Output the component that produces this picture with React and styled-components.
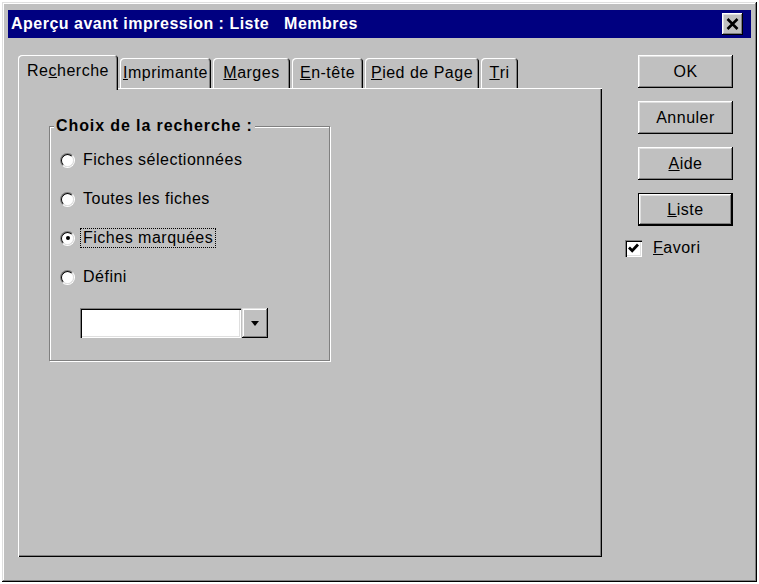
import styled, { createGlobalStyle } from "styled-components";

const GlobalStyle = createGlobalStyle`
  html, body {
    margin: 0;
    padding: 0;
    background: #fff;
  }
`;

const Window = styled.div`
  box-sizing: border-box;
  margin: 2px;
  width: 755px;
  height: 580px;
  padding: 8px 6px 6px 6px;
  background: #c0c0c0;
  box-shadow: inset -1px -1px #000, inset 1px 1px #dfdfdf,
    inset -2px -2px #808080, inset 2px 2px #fff;
  display: flex;
  flex-direction: column;
  font-family: "Liberation Sans", Arial, sans-serif;
  font-size: 16px;
  letter-spacing: 0.5px;
  color: #000;
`;

const TitleBar = styled.div`
  height: 28px;
  padding: 0 8px 0 3px;
  background: #000080;
  color: #fff;
  display: flex;
  align-items: center;
  justify-content: space-between;
`;

const Title = styled.span`
  font-weight: bold;
  letter-spacing: 0.5px;
  white-space: pre;
`;

const CloseButton = styled.div`
  box-sizing: border-box;
  width: 21px;
  height: 22px;
  background: #c0c0c0;
  box-shadow: inset -1px -1px #000, inset 1px 1px #fff,
    inset -2px -2px #808080, inset 2px 2px #dfdfdf;
  display: flex;
  align-items: center;
  justify-content: center;
`;

const Body = styled.div`
  display: flex;
  padding: 17px 0 0 10px;
  gap: 23px;
`;

const TabControl = styled.div`
  width: 584px;
  display: flex;
  flex-direction: column;
`;

const TabStrip = styled.div`
  height: 33px;
  display: flex;
  align-items: flex-end;
  gap: 2px;
`;

const Tab = styled.div`
  box-sizing: border-box;
  position: relative;
  z-index: ${(p) => (p.$active ? 1 : 0)};
  width: ${(p) => p.$w}px;
  height: ${(p) => (p.$active ? 35 : 30)}px;
  margin-bottom: ${(p) => (p.$active ? -2 : 0)}px;
  padding-bottom: ${(p) => (p.$active ? 3 : 0)}px;
  background: #c0c0c0;
  border-radius: 4px 4px 0 0;
  box-shadow: inset 1px 1px #fff, inset -1px 0 #000, inset -2px 0 #808080;
  display: flex;
  align-items: center;
  justify-content: center;
  white-space: nowrap;
`;

const Panel = styled.div`
  box-sizing: border-box;
  height: 469px;
  padding: 38px 0 0 31px;
  box-shadow: inset 1px 1px #fff, inset -1px -1px #000, inset -2px -2px #808080;
`;

const Group = styled.div`
  box-sizing: border-box;
  position: relative;
  width: 281px;
  height: 235px;
  padding: 23px 0 0 10px;
  border: 1px solid #808080;
  box-shadow: inset 1px 1px #fff, 1px 1px #fff;
  display: flex;
  flex-direction: column;
  gap: 19px;
`;

const Caption = styled.span`
  position: absolute;
  top: -10px;
  left: 4px;
  padding: 0 2px;
  line-height: 18px;
  background: #c0c0c0;
  font-weight: bold;
  letter-spacing: 0.9px;
`;

const RadioRow = styled.div`
  height: 20px;
  display: flex;
  align-items: center;
  gap: 5px;
`;

const RadioOuter = styled.span`
  box-sizing: border-box;
  width: 15px;
  height: 15px;
  flex-shrink: 0;
  border-radius: 50%;
  border: 1px solid;
  border-color: #808080 #fff #fff #808080;
  display: flex;
`;

const RadioInner = styled.span`
  box-sizing: border-box;
  width: 13px;
  height: 13px;
  border-radius: 50%;
  border: 1.5px solid;
  border-color: #000 #dfdfdf #dfdfdf #000;
  background: #fff;
  display: flex;
  align-items: center;
  justify-content: center;
`;

const RadioDot = styled.span`
  width: 4px;
  height: 4px;
  border-radius: 50%;
  background: #000;
`;

const RadioLabel = styled.span`
  padding: 0 2px;
  line-height: 18px;
  border: 1px dotted ${(p) => (p.$focused ? "#000" : "transparent")};
`;

const Combo = styled.div`
  height: 30px;
  margin: 2px 0 0 20px;
  display: flex;
  gap: 1px;
`;

const ComboField = styled.div`
  width: 161px;
  background: #fff;
  box-shadow: inset 1px 1px #808080, inset 2px 2px #000, inset -1px -1px #fff,
    inset -2px -2px #dfdfdf;
`;

const ComboButton = styled.div`
  width: 26px;
  background: #c0c0c0;
  box-shadow: inset -1px -1px #000, inset 1px 1px #dfdfdf,
    inset -2px -2px #808080, inset 2px 2px #fff;
  display: flex;
  align-items: center;
  justify-content: center;
`;

const Arrow = styled.span`
  width: 0;
  height: 0;
  margin-top: 1px;
  border-left: 4px solid transparent;
  border-right: 4px solid transparent;
  border-top: 5px solid #000;
`;

const Side = styled.div`
  width: 108px;
  display: flex;
  flex-direction: column;
  align-items: flex-end;
  gap: 13px;
`;

const Button = styled.div`
  box-sizing: border-box;
  width: 95px;
  height: 33px;
  background: #c0c0c0;
  border: ${(p) => (p.$default ? "1px solid #000" : "none")};
  box-shadow: inset -1px -1px #000, inset 1px 1px #fff,
    inset -2px -2px #808080, inset 2px 2px #dfdfdf;
  display: flex;
  align-items: center;
  justify-content: center;
`;

const CheckRow = styled.div`
  align-self: flex-start;
  height: 18px;
  display: flex;
  align-items: center;
  gap: 11px;
`;

const CheckBox = styled.span`
  box-sizing: border-box;
  width: 17px;
  height: 17px;
  background: #fff;
  box-shadow: inset 1px 1px #808080, inset 2px 2px #000, inset -1px -1px #fff,
    inset -2px -2px #dfdfdf;
  display: flex;
  align-items: center;
  justify-content: center;
`;

const tabs = [
  { label: <>Re<u>c</u>herche</>, w: 100, active: true },
  { label: <><u>I</u>mprimante</>, w: 91 },
  { label: <><u>M</u>arges</>, w: 77 },
  { label: <><u>E</u>n-tête</>, w: 71 },
  { label: <><u>P</u>ied de Page</>, w: 114 },
  { label: <><u>T</u>ri</>, w: 37 },
];

const choices = [
  { label: "Fiches sélectionnées" },
  { label: "Toutes les fiches" },
  { label: "Fiches marquées", checked: true },
  { label: "Défini" },
];

const Radio = ({ label, checked }) => (
  <RadioRow>
    <RadioOuter>
      <RadioInner>{checked && <RadioDot />}</RadioInner>
    </RadioOuter>
    <RadioLabel $focused={checked}>{label}</RadioLabel>
  </RadioRow>
);

const App = () => {
  return (
    <>
      <GlobalStyle />
      <Window>
        <TitleBar>
          <Title>{"Aperçu avant impression : Liste   Membres"}</Title>
          <CloseButton>
            <svg width="13" height="12" viewBox="0 0 13 12">
              <path d="M1.5 1 L11.5 11 M11.5 1 L1.5 11" stroke="#000" strokeWidth="2.6" />
            </svg>
          </CloseButton>
        </TitleBar>
        <Body>
          <TabControl>
            <TabStrip>
              {tabs.map((t, i) => (
                <Tab key={i} $w={t.w} $active={t.active}>
                  {t.label}
                </Tab>
              ))}
            </TabStrip>
            <Panel>
              <Group>
                <Caption>Choix de la recherche :</Caption>
                {choices.map((c) => (
                  <Radio key={c.label} label={c.label} checked={c.checked} />
                ))}
                <Combo>
                  <ComboField />
                  <ComboButton>
                    <Arrow />
                  </ComboButton>
                </Combo>
              </Group>
            </Panel>
          </TabControl>
          <Side>
            <Button>OK</Button>
            <Button>Annuler</Button>
            <Button>
              <span><u>A</u>ide</span>
            </Button>
            <Button $default>
              <span><u>L</u>iste</span>
            </Button>
            <CheckRow>
              <CheckBox>
                <svg width="11" height="10" viewBox="0 0 11 10">
                  <path d="M1 4.5 L4.2 7.7 L10 1.5" fill="none" stroke="#000" strokeWidth="2.8" />
                </svg>
              </CheckBox>
              <span><u>F</u>avori</span>
            </CheckRow>
          </Side>
        </Body>
      </Window>
    </>
  );
};

export default App;
